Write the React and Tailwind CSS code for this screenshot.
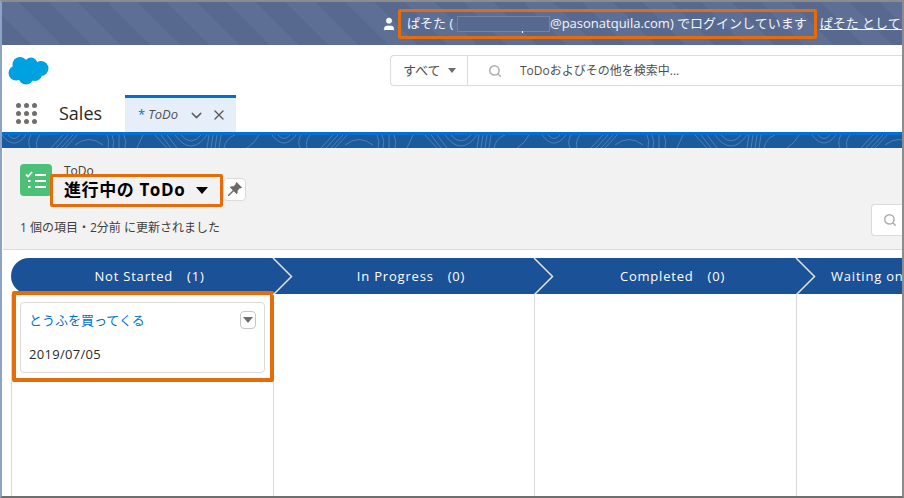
import React from "react";
import { ChevronDown, Search, User, X } from "lucide-react";

const font = "font-['Open_Sans','Noto_Sans_CJK_JP',sans-serif]";

const columns = [
  { name: "Not Started", count: 1, width: "w-[262px]", rounded: true },
  { name: "In Progress", count: 0, width: "w-[261px]" },
  { name: "Completed", count: 0, width: "w-[262px]" },
  { name: "Waiting on someone else", count: 0, width: "w-[262px]", clip: true },
];

// Salesforce cloud logo
const CloudLogo = () => (
  <svg width="41" height="29" viewBox="0 0 41 29" className="shrink-0">
    <g fill="#00a1e0">
      <circle cx="12" cy="8.5" r="7.5" />
      <circle cx="23" cy="8" r="6.5" />
      <circle cx="33" cy="12.5" r="7.5" />
      <circle cx="8" cy="17" r="7.5" />
      <circle cx="18" cy="21" r="7.5" />
      <circle cx="27" cy="18" r="7" />
      <rect x="8" y="8" width="24" height="12" />
    </g>
  </svg>
);

const AppGrid = () => (
  <div className="grid grid-cols-3 gap-[3px] w-[21px]">
    {Array.from({ length: 9 }).map((_, i) => (
      <span key={i} className="w-[5px] h-[5px] rounded-full bg-[#706e6b]" />
    ))}
  </div>
);

// Contour line texture of the blue brand strip
const BrandBand = () => (
  <svg className="absolute inset-0 w-full h-full">
    <defs>
      <pattern id="contour" x="-3" width="270" height="13" patternUnits="userSpaceOnUse">
        <g fill="none" stroke="#5b8bbd" strokeWidth="1" opacity="0.75">
          <path d="M3 0 Q15 16 27 0" />
          <path d="M9 0 Q15 7 21 0" />
          <path d="M31 13 Q28 6 32 0 M38 13 Q36 6 41 0" />
          <path d="M52 13 L64 0 M57 13 L69 0 M62 13 L74 0 M66 13 L78 0" />
          <path d="M76 10 Q90 -1 104 10" />
          <path d="M108 0 Q111 6 109 13 M113 0 Q116 6 114 13 M120 0 L120 13 M125 0 Q128 6 126 13" />
          <path d="M138 13 L144 0" />
          <path d="M156 0 L168 13 M162 0 L172 13 M168 0 L178 13" />
          <path d="M176 0 Q192 22 208 0" />
          <path d="M182 0 Q192 12 202 0" />
          <path d="M208 13 L210 0 M212 13 L214 0 M216 13 L218 0 M220 13 L222 0" />
          <path d="M225 13 Q227 3 236 0" />
          <path d="M248 13 Q256 8 260 0" />
        </g>
      </pattern>
    </defs>
    <rect width="100%" height="100%" fill="url(#contour)" />
  </svg>
);

const PinIcon = () => (
  <svg width="16" height="16" viewBox="0 0 16 16">
    <path d="M9.500 1 15 6.500 13.800 7.400 13 7.100 10.500 9.800C11 11 10.700 12.200 9.800 13.200L6.800 10.200 2 15 1 15 1 14 5.800 9.200 2.800 6.200C3.800 5.300 5 5 6.200 5.500L8.900 3 8.600 2.200Z" fill="#6b6967" />
  </svg>
);

const ListIcon = () => (
  <svg width="22" height="18" viewBox="0 0 22 18" fill="none" stroke="#fff" strokeWidth="2.200">
    <path d="M1 3.500 3 5.500 7 1" strokeWidth="1.800" />
    <path d="M10 4h11M10 10h11M10 16h11" />
    <path d="M3 10h2.500M3 16h2.500" />
  </svg>
);

const Chevron = () => (
  <svg width="21" height="38" viewBox="0 0 21 38" className="absolute right-[-20px] top-0 z-10">
    <path d="M1 0 19.500 18.500 1 37" fill="none" stroke="#e4e4e4" strokeWidth="1.500" />
  </svg>
);

const App = () => {
  return (
    <div className={`${font} w-[904px] h-[498px] overflow-hidden bg-white border-t-2 border-b-2 border-l-2 border-r-2 border-t-[#8c8c8c] border-b-[#6f6f6f] border-l-[#8da3c4] border-r-[#8c8c8c] relative`}>
      {/* Login banner */}
      <div className="h-[43px] flex items-center text-[13px] text-[#f4f5f8] bg-[repeating-linear-gradient(45deg,#586990_0_21px,#5e6f95_21px_42px)] whitespace-nowrap overflow-hidden">
        <div className="flex items-center w-[902px] pl-[379px] pt-px">
          <User size={16} fill="#fff" strokeWidth={1} className="shrink-0" />
          <span className="ml-[10px] w-[50px] shrink-0">ぱそた (</span>
          <span className="w-[93px] h-[16px] border border-[#75829f] bg-[#586990] shrink-0 relative">
            <span className="absolute left-[64px] bottom-[-2px] w-px h-[2px] bg-white" />
          </span>
          <span>@pasonatquila.com) でログインしています</span>
          <span className="ml-[13px] underline">ぱそた としてログアウト</span>
        </div>
      </div>

      {/* Global header */}
      <div className="h-[50px] flex items-center pl-[6px] bg-white">
        <CloudLogo />
        <div className="ml-[341px] h-[31px] mt-[1px] flex flex-1 border border-r-0 border-[#dddbda] rounded-l text-[#54698d]">
          <div className="w-[77px] flex items-center gap-[7px] pl-[12px] border-r border-[#dddbda] text-[13px] text-[#514f4d]">
            すべて
            <span className="w-0 h-0 border-l-[4px] border-r-[4px] border-t-[5px] border-l-transparent border-r-transparent border-t-[#706e6b]" />
          </div>
          <div className="flex items-center pl-[20px] text-[12px] text-[#514f4d]">
            <Search size={14} strokeWidth={2.5} className="text-[#b0adab]" />
            <span className="ml-[18px]">ToDoおよびその他を検索中...</span>
          </div>
        </div>
      </div>

      {/* App nav */}
      <div className="h-[37px] flex items-stretch bg-white">
        <div className="pl-[14px] flex items-center">
          <AppGrid />
        </div>
        <div className="w-[88px] pl-[22px] flex items-center text-[18px] text-[#2b2826] -mt-px">Sales</div>
        <div className="w-[111px] bg-[#e5eef9] border-t-[3px] border-[#0070d2] flex items-center pl-[13px] text-[13px] italic text-[#514f4d]">
          <span className="text-[#0070d2] mr-[3px] not-italic">*</span>
          ToDo
          <ChevronDown size={17} className="ml-[10px] text-[#605e5c]" />
          <X size={16} className="ml-[6px] text-[#605e5c]" />
        </div>
      </div>

      {/* Brand strip */}
      <div className="h-[16px] relative bg-[#1b5a9b] border-t-[3px] border-[#0070d2]">
        <BrandBand />
      </div>

      {/* List header */}
      <div className="h-[102px] ml-px bg-[#f3f2f2] border-b border-[#dddbda] relative rounded-t-sm">
        <div className="flex pl-[17px] pt-[16px]">
          <div className="w-[32px] h-[32px] rounded bg-[#4bc076] flex items-center justify-center">
            <ListIcon />
          </div>
          <div className="ml-[12px] -mt-[2px]">
            <div className="text-[12px] leading-[18px] text-[#3e3e3c]">ToDo</div>
            <div className="flex items-center -mt-[2px]">
              <span className="text-[17px] leading-[24px] font-bold tracking-[0.6px] text-black">進行中の ToDo</span>
              <span className="ml-[11px] w-0 h-0 border-l-[6px] border-r-[6px] border-t-[7px] border-l-transparent border-r-transparent border-t-black" />
              <span className="ml-[15px] -mt-[2px] w-[23px] h-[23px] bg-white border border-[#dddbda] rounded flex items-center justify-center">
                <PinIcon />
              </span>
            </div>
          </div>
        </div>
        <div className="pl-[17px] mt-[17px] text-[12px] leading-[18px] text-[#3e3e3c]">1 個の項目・2分前 に更新されました</div>
        <div className="absolute right-0 top-[56px] w-[31px] h-[32px] bg-white border border-r-0 border-[#dddbda] rounded-l flex items-center pl-[11px]">
          <Search size={14} strokeWidth={2.5} className="text-[#b0adab]" />
        </div>
      </div>

      {/* Kanban board */}
      <div className="flex pl-[9px] pt-[8px] h-[246px] overflow-hidden">
        {columns.map((col) => (
          <div key={col.name} className={`${col.width} shrink-0 flex flex-col`}>
            <div className={`relative h-[36px] shrink-0 pt-[2px] bg-[#1b5297] flex items-center justify-center text-[13px] tracking-[0.8px] text-white whitespace-nowrap ${col.rounded ? "rounded-l-[18px]" : ""} ${col.clip ? "justify-start pl-[35px]" : "pl-[15px]"}`}>
              <span>{col.name}</span>
              <span className="ml-[14px]">({col.count})</span>
              {!col.clip && <Chevron />}
            </div>
            <div className="flex-1 border-l border-[#d8d8d8] px-[8px] pt-[8px]">
              {col.rounded && (
                <div className="h-[71px] border border-[#dddbda] rounded bg-white relative px-[8px] pt-[8px]">
                  <div className="text-[13px] leading-[18px] text-[#0070d2]">とうふを買ってくる</div>
                  <div className="mt-[16px] text-[13px] tracking-[0.3px] leading-[18px] text-[#2b2826]">2019/07/05</div>
                  <span className="absolute right-[8px] top-[8px] w-[16px] h-[18px] border border-[#c9c7c5] rounded flex items-center justify-center">
                    <span className="w-0 h-0 border-l-[5px] border-r-[5px] border-t-[6px] border-l-transparent border-r-transparent border-t-[#706e6b]" />
                  </span>
                </div>
              )}
            </div>
          </div>
        ))}
      </div>

      {/* Orange annotation boxes */}
      <div className="absolute left-[396px] top-[7px] w-[419px] h-[30px] border-[3px] border-[#e46c0a] rounded-[2px]" />
      <div className="absolute left-[48px] top-[172px] w-[173px] h-[33px] border-[3px] border-[#e46c0a] rounded-[2px]" />
      <div className="absolute left-[10px] top-[289px] w-[262px] h-[91px] border-[4px] border-[#e46c0a] rounded-[2px]" />
    </div>
  );
};

export default App;
